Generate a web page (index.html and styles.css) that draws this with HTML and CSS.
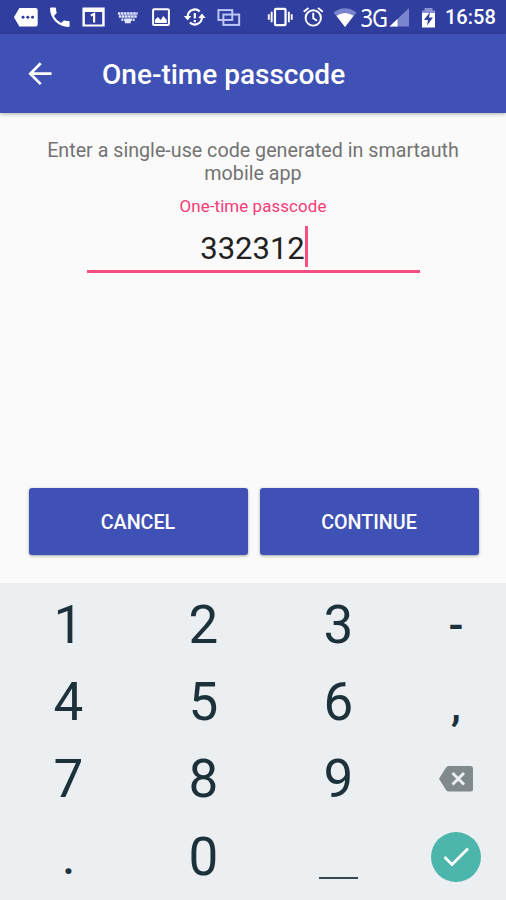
FILE: index.html
```html
<!DOCTYPE html>
<html lang="en">
<head>
<meta charset="utf-8">
<title>One-time passcode</title>
<link rel="stylesheet" href="styles.css">
</head>
<body>
<div class="screen">
  <header class="status">
    <div class="notifications">
      <svg class="icon" viewBox="-17 -17 34 34"><path fill="#fff" d="M-7.500-9H9a2 2 0 0 1 2 2V7.500a2 2 0 0 1-2 2H-7.500L-13 .3z"/><g fill="#303f9f"><circle cx="-3.800" cy=".3" r="1.500"/><circle cx="1" cy=".3" r="1.500"/><circle cx="5.800" cy=".3" r="1.500"/></g></svg>
      <svg class="icon" viewBox="-17 -17 34 34"><path fill="#fff" transform="translate(-14.200 -13) scale(1.100)" d="M6.620 10.790a15.150 15.150 0 0 0 6.590 6.590l2.200-2.200a1 1 0 0 1 1.020-.24c1.120.37 2.330.57 3.570.57a1 1 0 0 1 1 1V20a1 1 0 0 1-1 1A17 17 0 0 1 3 4a1 1 0 0 1 1-1h3.500a1 1 0 0 1 1 1c0 1.250.2 2.450.57 3.570a1 1 0 0 1-.25 1.020z"/></svg>
      <svg class="icon" viewBox="-17 -17 34 34"><path fill="#fff" fill-rule="evenodd" d="M-11.500-9.500h22.500v19h-22.500zM-9-5V7.500H8.500V-5z"/><path d="M-3-1.500L.3-3V5.500" fill="none" stroke="#fff" stroke-width="2.200"/></svg>
      <svg class="icon" viewBox="-17 -17 34 34"><path fill="none" stroke="#e1e5ff" stroke-width="2.600" stroke-dasharray="2.600 .5" d="M-10-3.500H10M-9-.5H9"/><path fill="none" stroke="#e1e5ff" stroke-width="2.400" d="M-6.500 2.800h2m.7 0h8m.7 0h2M-3 5.200H3"/></svg>
      <svg class="icon" viewBox="-17 -17 34 34"><rect x="-7.800" y="-7.800" width="16" height="16" rx="1" fill="none" stroke="#fff" stroke-width="2"/><path fill="#fff" d="M-6 6V3l3-3 3 3 2.500-4L6 3v3z"/></svg>
      <svg class="icon" viewBox="-17 -17 34 34"><g fill="none" stroke="#fff" stroke-width="2.200"><path d="M-7.200-1A7.200 7.200 0 0 1 5-5.500M7.200 1A7.200 7.200 0 0 1-5 5.500"/><path d="M0-4V1.500M0 3v2.200"/></g><path fill="#fff" d="M-11-1h7.500l-3.800 4.500zM11 1H3.500l3.800-4.500z"/></svg>
      <svg class="icon" viewBox="-17 -17 34 34"><g fill="none" stroke="#bdc7fa" stroke-width="2"><rect x="-10.500" y="-7" width="14" height="10"/><rect x="-5.500" y="-2.500" width="16" height="10.500"/></g></svg>
    </div>
    <div class="system">
      <svg class="icon" viewBox="-17 -17 34 34"><rect x="-5.500" y="-8.500" width="11" height="17" rx="1" fill="none" stroke="#fff" stroke-width="2.300"/><path d="M-9-5.500v11M9-5.500v11M-12-2.800v5.600M12-2.800v5.600" stroke="#fff" stroke-width="2"/></svg>
      <svg class="icon" viewBox="-17 -17 34 34"><g fill="none" stroke="#fff" stroke-width="2"><circle cy="1" r="8"/><path d="M0-4.500V1.300L4 4M-10-5.500l5-4M10-5.500l-5-4"/></g></svg>
      <svg class="wifi" viewBox="0 0 24 34"><path fill="#7985cd" d="M.5 12.500Q12 4 23.500 12.500L12 27z"/><path fill="#fff" d="M3.500 15.800Q12 10 20.500 15.800L12 27z"/></svg>
      <span class="network">3G</span>
      <svg class="signal" viewBox="0 0 22 34"><path fill="#7985cd" d="M21 8v18.500H1.500z"/><path fill="#fff" d="M9.500 18.900v7.600h-8z"/></svg>
      <svg class="battery" viewBox="0 0 18 34"><path fill="#8791d3" d="M2 10.500h2.500V8h8v2.500H15V14H2z"/><path fill="#fff" d="M2 13h13v14.500H2z"/><path fill="#303f9f" d="M10 12l-6 8h4l-1 5.500 6-8H9z"/></svg>
      <span class="clock">16:58</span>
    </div>
  </header>

  <div class="toolbar">
    <svg class="back" viewBox="0 0 24 24"><path fill="none" stroke="#fff" stroke-width="2.700" d="M12.700 1.300L2.300 11.700l10.400 10.400M2.300 11.700H23.500"/></svg>
    <h1 class="title">One-time passcode</h1>
  </div>

  <main class="content">
    <p class="hint">Enter a single-use code generated in smartauth mobile app</p>
    <div class="field">
      <span class="label">One-time passcode</span>
      <div class="input"><span class="value">332312</span><span class="caret"></span></div>
    </div>
    <div class="actions">
      <button class="button">CANCEL</button>
      <button class="button">CONTINUE</button>
    </div>
  </main>

  <div class="keypad">
    <span>1</span><span>2</span><span>3</span><span class="symbol">-</span>
    <span>4</span><span>5</span><span>6</span><span class="symbol low">,</span>
    <span>7</span><span>8</span><span>9</span>
    <span><svg class="delete" viewBox="0 0 34 26"><path fill="#808a8d" d="M9.500 0H31.500Q34 0 34 2.500v20.500Q34 25.500 31.500 25.500H9.500Q8 25.500 7 24L0 12.800 7 1.500Q8 0 9.500 0z"/><path d="M13.500 7l11.500 11.500M25 7L13.500 18.500" stroke="#eceff1" stroke-width="2.900"/></svg></span>
    <span class="symbol low">.</span><span>0</span><span><i class="space"></i></span>
    <span><svg class="done" viewBox="0 0 50 50"><circle cx="25" cy="25" r="25" fill="#4db6ac"/><path d="M13.500 25l7.500 7.500L37 16.500" fill="none" stroke="#fff" stroke-width="2.800"/></svg></span>
  </div>
</div>
</body>
</html>
```
FILE: styles.css
```css
* {
  box-sizing: border-box;
}

body {
  margin: 0;
  font-family: Roboto, "Liberation Sans", sans-serif;
}

svg {
  display: block;
  flex: none;
}

.screen {
  display: flex;
  flex-direction: column;
  width: 506px;
  height: 900px;
  overflow: hidden;
  background: #fafafa;
}

.status {
  display: flex;
  justify-content: space-between;
  height: 34px;
  padding: 0 11px 0 10px;
  background: #303f9f;
}

.notifications,
.system {
  display: flex;
  align-items: center;
}

.icon {
  width: 33.6px;
  height: 34px;
}

.system .icon {
  width: 32.500px;
}

.wifi {
  width: 24px;
  height: 34px;
  margin-left: 4px;
}

.network {
  width: 31px;
  padding-left: 4px;
  color: #fff;
  font-family: "Noto Sans", "Open Sans", sans-serif;
  font-size: 25.500px;
  line-height: 36px;
  letter-spacing: -1px;
  white-space: nowrap;
  transform: scaleX(0.86);
  transform-origin: left;
}

.signal {
  width: 22px;
  height: 34px;
}

.battery {
  width: 18px;
  height: 34px;
  margin-left: 10px;
}

.clock {
  width: 50px;
  margin-left: 7px;
  color: #fff;
  font-size: 20px;
  font-weight: 500;
  line-height: 36px;
  white-space: nowrap;
}

.toolbar {
  display: flex;
  align-items: center;
  height: 79px;
  padding-left: 28px;
  background: #3f51b5;
  box-shadow: 0 1px 4px rgba(0, 0, 0, 0.3);
}

.back {
  width: 24px;
  height: 24px;
}

.title {
  margin: 3px 0 0 50px;
  color: #fff;
  font-size: 28px;
  font-weight: 500;
  line-height: 36px;
}

.content {
  display: flex;
  flex: 1;
  flex-direction: column;
  align-items: center;
  padding: 26px 28px 28px;
}

.hint {
  width: 430px;
  margin: 0;
  color: #737373;
  font-size: 19.700px;
  line-height: 23px;
  text-align: center;
}

.field {
  display: flex;
  flex-direction: column;
  align-items: center;
  width: 333px;
  margin-top: 11px;
  border-bottom: 3px solid #f84f83;
}

.label {
  color: #f83a78;
  font-size: 16.900px;
  line-height: 20px;
  letter-spacing: 0.1px;
}

.input {
  display: flex;
  align-items: flex-start;
  height: 54px;
  padding: 10px 0 0 2px;
}

.value {
  padding-top: 3px;
  color: #212121;
  font-size: 31px;
  line-height: 40px;
}

.caret {
  width: 3px;
  height: 41px;
  background: #f84f83;
}

.actions {
  display: flex;
  gap: 12px;
  width: 450px;
  margin: auto 0 0 1px;
}

.button {
  flex: 1;
  height: 67px;
  padding: 2px 0 0;
  border: 0;
  border-radius: 3px;
  background: #3f51b5;
  box-shadow: 0 1px 3px rgba(0, 0, 0, 0.35);
  color: #fff;
  font: 500 19.700px Roboto, "Liberation Sans", sans-serif;
}

.keypad {
  display: grid;
  grid-template-columns: repeat(3, 135px) 1fr;
  grid-template-rows: repeat(4, 77.400px);
  height: 317px;
  padding-top: 3px;
  padding-left: 1px;
  background: #eceff1;
  color: #1c313a;
  font-size: 53px;
}

.keypad > span {
  display: flex;
  align-items: center;
  justify-content: center;
  line-height: 62px;
}

.keypad > .symbol {
  font-size: 44px;
  font-weight: 500;
  line-height: 60px;
}

.keypad > .low {
  padding-top: 5px;
}

.delete {
  width: 34px;
  height: 26px;
}

.done {
  width: 50px;
  height: 50px;
}

.space {
  width: 39px;
  height: 2px;
  margin-top: 43px;
  background: #37474f;
}
```
